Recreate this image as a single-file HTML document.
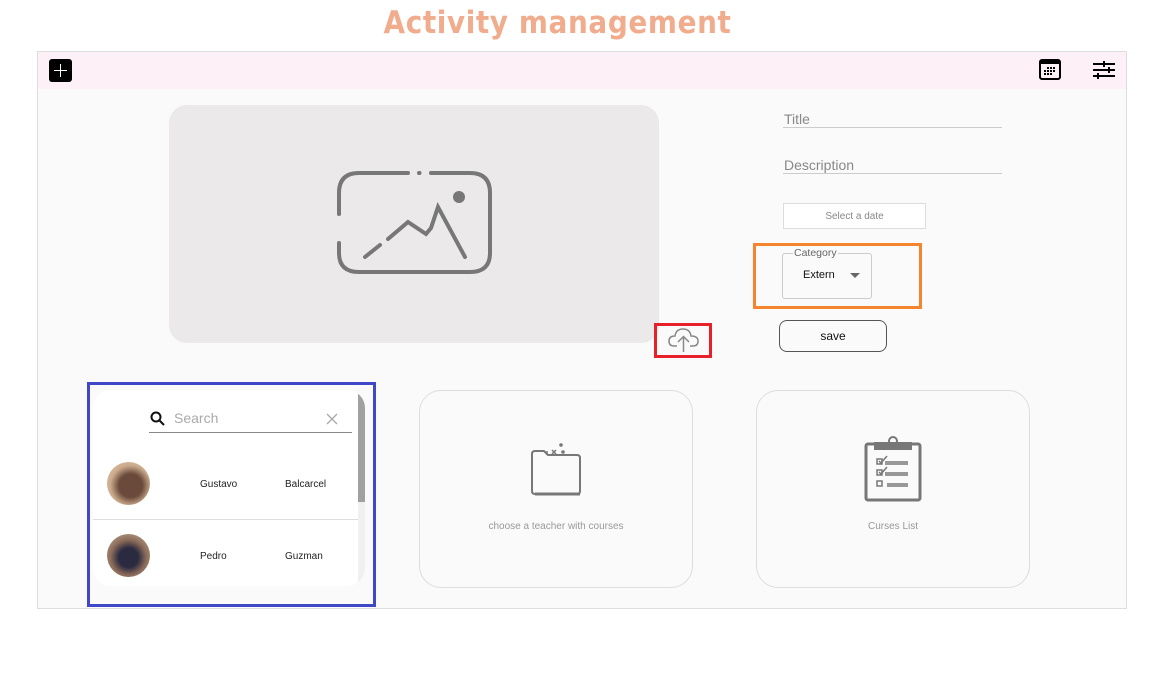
<!DOCTYPE html>
<html><head><meta charset="utf-8"><style>
*{margin:0;padding:0;box-sizing:border-box}
body{width:1160px;height:674px;background:#fff;font-family:"Liberation Sans",sans-serif;position:relative;overflow:hidden}
.a{position:absolute}
h1{position:absolute;left:0;width:1115px;top:3px;text-align:center;font-size:31px;color:#f0ac8c;font-weight:bold;letter-spacing:0.6px;font-family:"DejaVu Sans Condensed","Liberation Sans Narrow",sans-serif;line-height:40px}
.lab{color:#888;font-size:14px}
.ul{border-bottom:1px solid #ccc}
.sm{font-size:10px;color:#222}
</style></head><body>
<h1>Activity management</h1>
<div class="a" style="left:37px;top:51px;width:1090px;height:558px;border:1px solid #ddd;background:#fafafa"></div>
<div class="a" style="left:38px;top:52px;width:1088px;height:37px;background:#fdf1f7"></div>
<div class="a" style="left:49px;top:59px;width:23px;height:23px;background:#000;border-radius:3px"></div>
<div class="a" style="left:54px;top:70px;width:13px;height:1px;background:#fff"></div>
<div class="a" style="left:60px;top:64px;width:1px;height:13px;background:#fff"></div>
<svg class="a" style="left:1039px;top:59px" width="23" height="22"><rect x="1" y="1" width="20" height="19" rx="2" fill="none" stroke="#000" stroke-width="2"/><rect x="1" y="1" width="20" height="4" fill="#000"/><g fill="#000"><rect x="8" y="8" width="2" height="2"/><rect x="11" y="8" width="2" height="2"/><rect x="14" y="8" width="2" height="2"/><rect x="5" y="11" width="2" height="2"/><rect x="8" y="11" width="2" height="2"/><rect x="11" y="11" width="2" height="2"/><rect x="14" y="11" width="2" height="2"/><rect x="5" y="14" width="2" height="2"/><rect x="8" y="14" width="2" height="2"/><rect x="11" y="14" width="2" height="2"/></g></svg>
<svg class="a" style="left:1093px;top:60px" width="23" height="20"><g stroke="#000" stroke-width="2"><line x1="0" y1="4" x2="22" y2="4"/><line x1="0" y1="10" x2="22" y2="10"/><line x1="0" y1="16" x2="22" y2="16"/><line x1="11" y1="1" x2="11" y2="7"/><line x1="16" y1="7" x2="16" y2="13"/><line x1="5" y1="13" x2="5" y2="19"/></g></svg>
<div class="a" style="left:169px;top:105px;width:490px;height:238px;background:#ebe9ea;border-radius:18px"></div>
<svg class="a" style="left:330px;top:165px" width="170" height="115" fill="none" stroke="#777" stroke-width="4" stroke-linecap="round"><path d="M9 49 V28 Q9 8 29 8 H78 M89 8 H89.5 M101 8 H140 Q160 8 160 28 V88 Q160 107 140 107 H29 Q9 107 9 88 V78"/><circle cx="129" cy="32" r="6" fill="#777" stroke="none"/><path d="M35 92 L50 80 M58 74 L78 57 L96 69 L101 63 L108 42 L135 92"/></svg>
<div class="a" style="left:654px;top:323px;width:58px;height:35px;border:3px solid #e8202a"></div>
<svg class="a" style="left:668px;top:326px" width="32" height="28" fill="none" stroke="#888" stroke-width="1.5"><path d="M9 20 H6 Q1 20 1 15 Q1 10 7 10 Q8 3 15 3 Q22 3 23 10 Q30 10 30 15 Q30 20 25 20 H22"/><path d="M15.5 26 V11 M10 16 L15.5 10.5 L21 16"/></svg>
<div class="a lab" style="left:784px;top:111px">Title</div>
<div class="a ul" style="left:783px;top:127px;width:219px"></div>
<div class="a lab" style="left:784px;top:157px">Description</div>
<div class="a ul" style="left:783px;top:173px;width:219px"></div>
<div class="a" style="left:783px;top:203px;width:143px;height:26px;background:#fff;border:1px solid #ddd;font-size:10px;color:#888;text-align:center;line-height:26px">Select a date</div>
<div class="a" style="left:753px;top:243px;width:169px;height:66px;border:3px solid #f5842c"></div>
<div class="a" style="left:782px;top:253px;width:90px;height:46px;border:1px solid #ccc;border-radius:3px"></div>
<div class="a" style="left:793px;top:247px;font-size:10.5px;color:#666;background:#fafafa;padding:0 1px">Category</div>
<div class="a" style="left:803px;top:269px;font-size:11px;color:#111">Extern</div>
<div class="a" style="left:850px;top:273px;border-left:5px solid transparent;border-right:5px solid transparent;border-top:5px solid #666"></div>
<div class="a" style="left:779px;top:320px;width:108px;height:32px;border:1px solid #555;border-radius:8px;font-size:12px;text-align:center;line-height:30px;color:#111;background:#fafafa">save</div>
<div class="a" style="left:87px;top:382px;width:289px;height:225px;border:3px solid #4048c8"></div>
<div class="a" style="left:93px;top:390px;width:272px;height:196px;background:#fff;border-radius:18px;overflow:hidden">
<div class="a" style="left:265px;top:0;width:7px;height:196px;background:#f0f0f0"></div>
<div class="a" style="left:265px;top:0;width:7px;height:112px;background:#a0a0a0"></div>
<div class="a" style="left:0;top:129px;width:265px;height:1px;background:#ddd"></div>
</div>
<svg class="a" style="left:150px;top:411px" width="16" height="16" fill="none" stroke="#111" stroke-width="2"><circle cx="6" cy="6" r="4.5"/><line x1="9.5" y1="9.5" x2="14" y2="14"/></svg>
<div class="a" style="left:174px;top:410px;font-size:14px;color:#aaa">Search</div>
<svg class="a" style="left:326px;top:413px" width="12" height="12" stroke="#aaa" stroke-width="1.3"><line x1="1" y1="1" x2="11" y2="11"/><line x1="11" y1="1" x2="1" y2="11"/></svg>
<div class="a" style="left:149px;top:432px;width:203px;height:1px;background:#888"></div>
<div class="a" style="left:107px;top:462px;width:43px;height:43px;border-radius:50%;background:radial-gradient(circle at 55% 55%,#6a4a3a 0 35%,#c9a98a 60%,#e8cfb0)"></div>
<div class="a" style="left:107px;top:534px;width:43px;height:43px;border-radius:50%;background:radial-gradient(circle at 50% 55%,#2a2a40 0 30%,#8a6a58 55%,#c8b8a0)"></div>
<div class="a sm" style="left:200px;top:479px">Gustavo</div>
<div class="a sm" style="left:285px;top:479px">Balcarcel</div>
<div class="a sm" style="left:200px;top:551px">Pedro</div>
<div class="a sm" style="left:285px;top:551px">Guzman</div>
<div class="a" style="left:419px;top:390px;width:274px;height:198px;border:1px solid #ddd;border-radius:22px"></div>
<div class="a" style="left:756px;top:390px;width:274px;height:198px;border:1px solid #ddd;border-radius:22px"></div>
<svg class="a" style="left:528px;top:442px" width="56" height="56" fill="none" stroke="#777" stroke-width="2"><path d="M4 12 Q4 9 7 9 H16 L20 13 H49 Q52 13 52 16 V49 Q52 52 49 52 H7 Q4 52 4 49 Z"/><line x1="7" y1="52" x2="52" y2="52" stroke-width="3"/><path d="M19 9 V13 M24 8 L28 12 M28 8 L24 12" stroke-width="1.5"/><circle cx="33" cy="3" r="0.8" fill="#777"/><circle cx="35" cy="10" r="0.8" fill="#777"/></svg>
<svg class="a" style="left:862px;top:436px" width="62" height="68"><rect x="4" y="8" width="54" height="56" rx="2" fill="none" stroke="#777" stroke-width="3"/><rect x="12" y="6" width="38" height="8" fill="#777"/><circle cx="31" cy="5" r="4" fill="none" stroke="#777" stroke-width="2"/><g stroke="#777" stroke-width="1.5" fill="none"><rect x="15" y="23" width="5" height="5"/><rect x="15" y="34" width="5" height="5"/><rect x="15" y="45" width="5" height="5"/><path d="M17 25 L19 27 L25 20 M17 36 L19 38 L25 31"/><path d="M23 26 H46 M23 28 H46 M23 37 H46 M23 39 H46 M25 48 H46 M25 50 H46"/></g></svg>
<div class="a" style="left:420px;top:521px;width:272px;text-align:center;font-size:10px;color:#999">choose a teacher with courses</div>
<div class="a" style="left:757px;top:521px;width:272px;text-align:center;font-size:10px;color:#999">Curses List</div>
</body></html>
